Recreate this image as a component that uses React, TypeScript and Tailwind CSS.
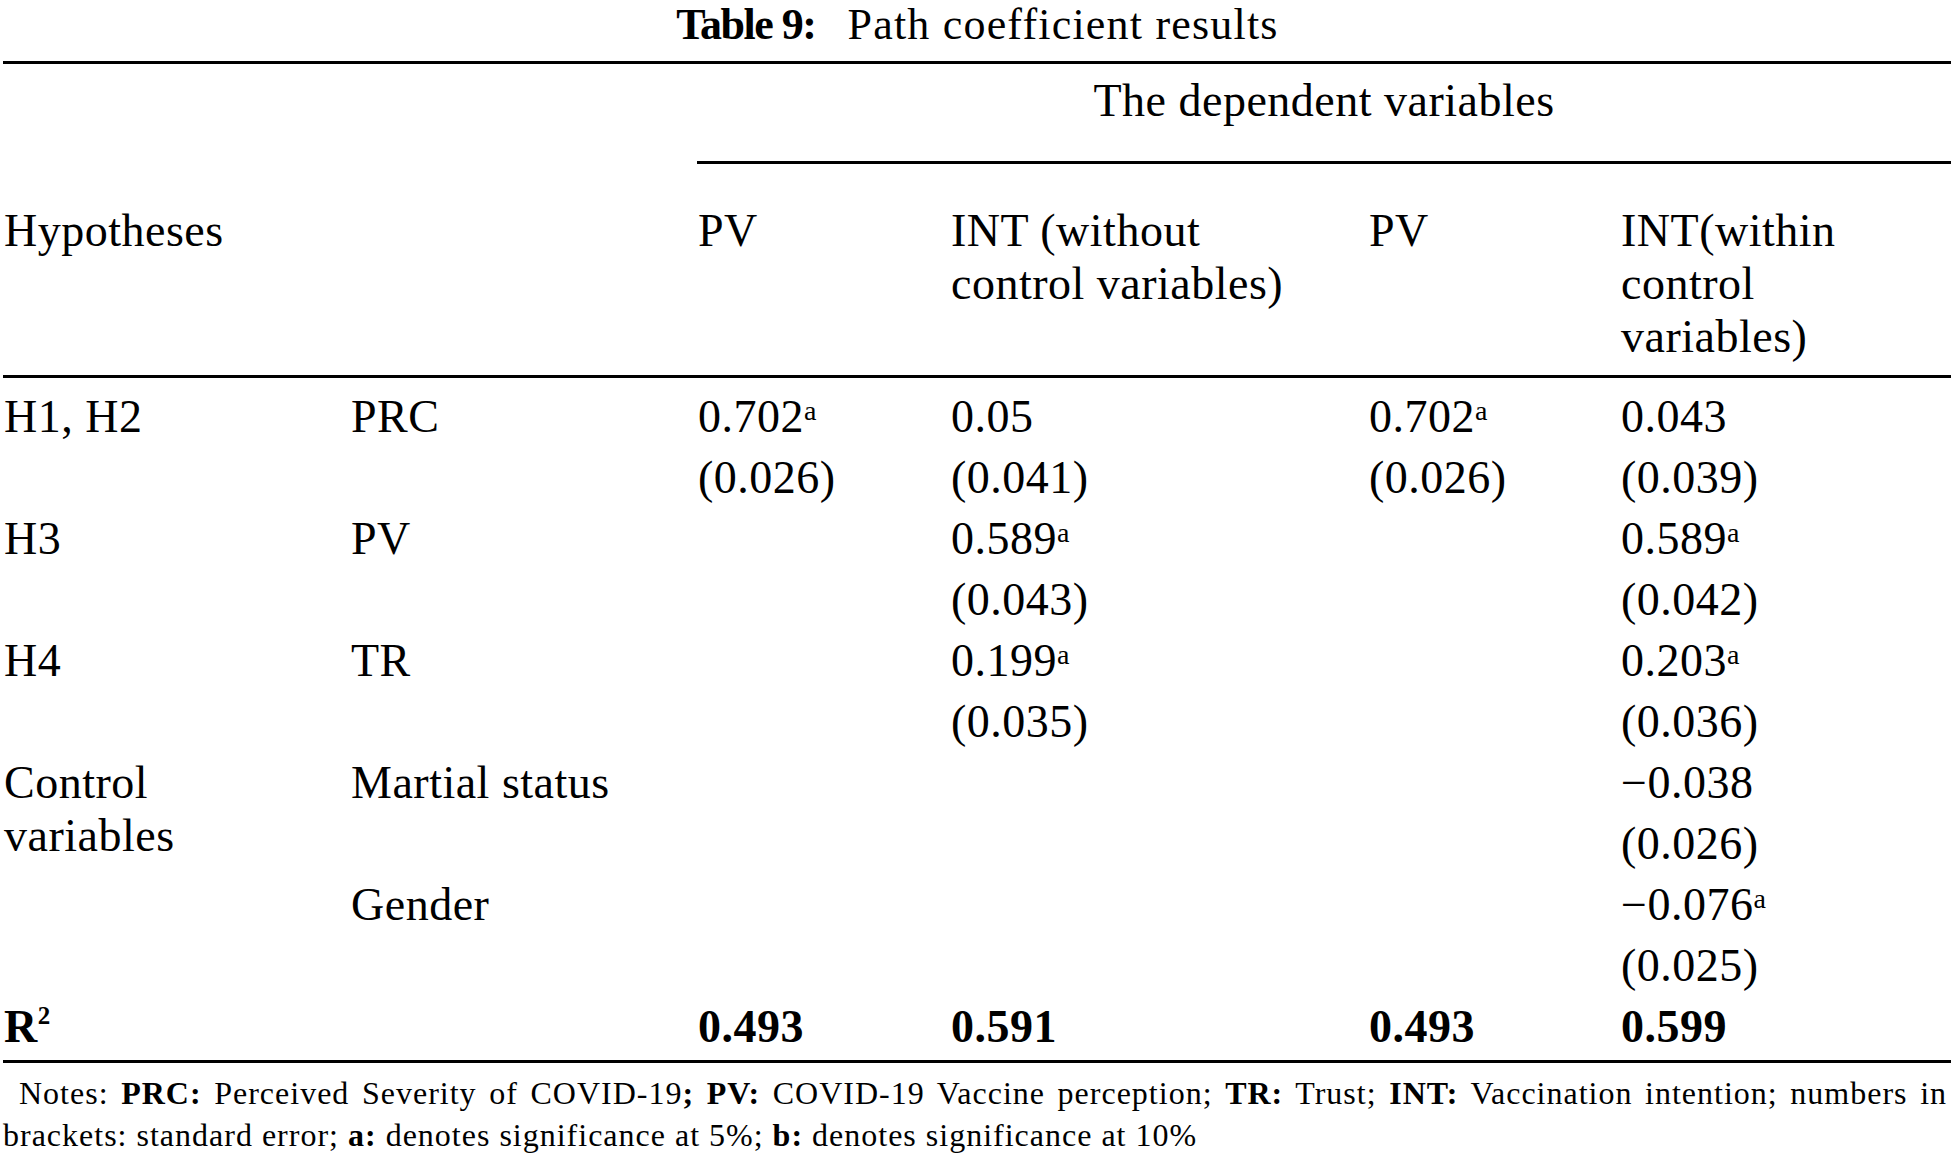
import React from "react";

const Sup = ({ children }: { children: React.ReactNode }) => (
  <sup className="text-[28px] top-[-12px] tracking-normal">{children}</sup>
);

type Cell = React.ReactNode[];

const Val = ({ lines }: { lines?: Cell }) => (
  <div className="flex flex-col gap-[8px] py-[4px]">
    {(lines ?? []).map((l, i) => (
      <div key={i}>{l}</div>
    ))}
  </div>
);

const rows: { h: React.ReactNode[]; v: string; c3?: Cell; c4?: Cell; c5?: Cell; c6?: Cell }[] = [
  {
    h: ["H1, H2"],
    v: "PRC",
    c3: [<>0.702<Sup>a</Sup></>, "(0.026)"],
    c4: ["0.05", "(0.041)"],
    c5: [<>0.702<Sup>a</Sup></>, "(0.026)"],
    c6: ["0.043", "(0.039)"],
  },
  {
    h: ["H3"],
    v: "PV",
    c4: [<>0.589<Sup>a</Sup></>, "(0.043)"],
    c6: [<>0.589<Sup>a</Sup></>, "(0.042)"],
  },
  {
    h: ["H4"],
    v: "TR",
    c4: [<>0.199<Sup>a</Sup></>, "(0.035)"],
    c6: [<>0.203<Sup>a</Sup></>, "(0.036)"],
  },
  {
    h: ["Control", "variables"],
    v: "Martial status",
    c6: ["\u22120.038", "(0.026)"],
  },
  {
    h: [],
    v: "Gender",
    c6: [<>{"\u22120.076"}<Sup>a</Sup></>, "(0.025)"],
  },
];

export default function App() {
  return (
    <div className="w-[1954px] h-[1162px] overflow-hidden bg-white text-black font-['Liberation_Serif',serif]">
      {/* Title */}
      <div className="h-[61px] pt-[5px] text-[44px] leading-[40px] text-center pl-[1px] whitespace-nowrap">
        <span className="font-bold tracking-[-1.5px]">Table 9:</span>
        <span className="ml-[32px] tracking-[1.2px]">Path coefficient results</span>
      </div>
      <div className="mx-[3px] h-[3px] bg-black" />

      {/* Spanning header */}
      <div className="ml-[697px] mr-[3px]">
        <div className="pt-[10px] pb-[33px] text-[46px] leading-[54px] tracking-[0.5px] text-center">
          The dependent variables
        </div>
        <div className="h-[3px] bg-black" />
      </div>

      {/* Column headers */}
      <div className="ml-[4px] mr-[3px] grid grid-cols-[347px_347px_253px_418px_252px_1fr] text-[46px] leading-[53px] tracking-[0.5px] pt-[40px] pb-[12px]">
        <div>Hypotheses</div>
        <div />
        <div>PV</div>
        <div>
          <div>INT (without</div>
          <div>control variables)</div>
        </div>
        <div>PV</div>
        <div>
          <div>INT(within</div>
          <div>control</div>
          <div>variables)</div>
        </div>
      </div>
      <div className="mx-[3px] h-[3px] bg-black" />

      {/* Body */}
      <div className="ml-[4px] mr-[3px] grid grid-cols-[347px_347px_253px_418px_252px_1fr] grid-rows-[repeat(5,122px)_61px] text-[46px] leading-[53px] tracking-[0.5px] pt-[8px] pb-[3px]">
        {rows.map((r, i) => (
          <React.Fragment key={i}>
            <div className="py-[4px]">
              {r.h.map((t, j) => (
                <div key={j}>{t}</div>
              ))}
            </div>
            <div className="py-[4px]">{r.v}</div>
            <Val lines={r.c3} />
            <Val lines={r.c4} />
            <Val lines={r.c5} />
            <Val lines={r.c6} />
          </React.Fragment>
        ))}
        <div className="py-[4px] font-bold">
          R<sup className="text-[25px] top-[-18px] tracking-normal">2</sup>
        </div>
        <div />
        <div className="py-[4px] font-bold">0.493</div>
        <div className="py-[4px] font-bold">0.591</div>
        <div className="py-[4px] font-bold">0.493</div>
        <div className="py-[4px] font-bold">0.599</div>
      </div>
      <div className="mx-[3px] h-[3px] bg-black" />

      {/* Notes */}
      <div className="ml-[3px] w-[1944px] mt-[9px] text-[32px] leading-[42px] tracking-[1px]">
        <div className="indent-[16px] text-justify [text-align-last:justify]">
          Notes: <b>PRC:</b> Perceived Severity of COVID-19<b>;</b> <b>PV:</b> COVID-19 Vaccine perception;{" "}
          <b>TR:</b> Trust; <b>INT:</b> Vaccination intention; numbers in
        </div>
        <div>
          brackets: standard error; <b>a:</b> denotes significance at 5%; <b>b:</b> denotes significance at 10%
        </div>
      </div>
    </div>
  );
}
